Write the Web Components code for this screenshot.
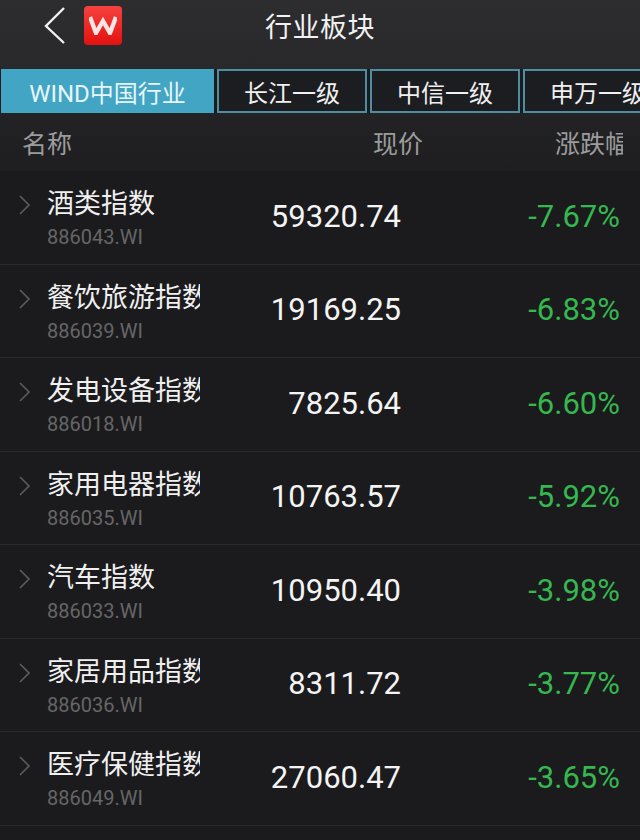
<!DOCTYPE html>
<html>
<head>
<meta charset="utf-8">
<style>
html, body { margin: 0; height: 100%; background: #1b1b1d; overflow: hidden; }
body { font-family: Roboto, "Noto Sans CJK SC", sans-serif; }
</style>
</head>
<body>
<quote-app></quote-app>
<script>
const FONT = `Roboto, "Noto Sans CJK SC", sans-serif`;

customElements.define("top-bar", class extends HTMLElement {
    connectedCallback() {
        this.attachShadow({mode: "open"}).innerHTML = `
<style>
:host { display: flex; align-items: center; height: 50px; position: relative; margin-bottom: 18px; color: #f2f2f2; }
.back { margin-left: 44px; width: 22px; height: 40px; }
.logo { margin-left: 18px; width: 38px; height: 39px; border-radius: 4px; background: linear-gradient(#f5423f, #e2120f); display: flex; align-items: center; justify-content: center; }
.title { flex: 1; text-align: center; font-size: 27px; margin-right: 122px; margin-left: 0; letter-spacing: 0.5px; }
</style>
<svg class="back" viewBox="0 0 22 40"><path d="M20 3 L2 21 L20 38" fill="none" stroke="#f0f0f0" stroke-width="2.4"/></svg>
<div class="logo"><svg width="28" height="20" viewBox="0 0 28 20"><path d="M1 2 L7 18 L14 6 L21 18 L27 2" fill="none" stroke="#fbe4e4" stroke-width="4.4"/></svg></div>
<div class="title"><slot></slot></div>
`;
    }
});

customElements.define("tab-item", class extends HTMLElement {
    connectedCallback() {
        this.attachShadow({mode: "open"}).innerHTML = `
<style>
:host { display: flex; flex: none; box-sizing: border-box; height: 44px; align-items: center; justify-content: center; white-space: nowrap; overflow: hidden;
    font-size: 24px; color: #f0f0f0; background: #1c1d20; border: 2px solid #4f8ea1; }
:host([active]) { background: #43a5c4; border-color: #43a5c4; color: #e6f6fa; }
</style>
<slot></slot>
`;
    }
});

customElements.define("tab-bar", class extends HTMLElement {
    connectedCallback() {
        this.attachShadow({mode: "open"}).innerHTML = `
<style>
:host { display: flex; gap: 3px; padding-left: 1px; width: 700px; }
</style>
<slot></slot>
`;
    }
});

customElements.define("column-head", class extends HTMLElement {
    connectedCallback() {
        this.attachShadow({mode: "open"}).innerHTML = `
<style>
:host { display: flex; align-items: center; height: 58px; color: #9c9c9c; font-size: 25px; white-space: nowrap; overflow: hidden; }
.name { margin-left: 22px; width: 351px; }
.price { width: 182px; }
.change { width: 68px; overflow: hidden; }
</style>
<div class="name">名称</div><div class="price">现价</div><div class="change">涨跌幅</div>
`;
    }
});

customElements.define("quote-row", class extends HTMLElement {
    connectedCallback() {
        const a = n => this.getAttribute(n);
        this.attachShadow({mode: "open"}).innerHTML = `
<style>
:host { display: flex; box-sizing: border-box; height: 93.5px; align-items: center; border-bottom: 1px solid #29292b; }
.arrow { width: 12px; height: 22px; margin-left: 19px; margin-right: 16px; align-self: flex-start; margin-top: 23px; }
.info { width: 153px; overflow: hidden; align-self: flex-start; }
.name { font-size: 27px; line-height: 36px; margin-top: 15px; color: #f0f0f0; white-space: nowrap; }
.code { font-size: 20px; line-height: 24px; margin-top: 3px; color: #666; }
.price { width: 201px; text-align: right; font-size: 31px; color: #f4f4f4; margin-top: -2px; }
.pct { width: 219px; text-align: right; font-size: 31px; color: #34b84f; margin-top: -2px; }
</style>
<svg class="arrow" viewBox="0 0 12 22"><path d="M1 2 L10 11 L1 20" fill="none" stroke="#5c5c5c" stroke-width="1.6"/></svg>
<div class="info"><div class="name">${a("name")}</div><div class="code">${a("code")}</div></div>
<div class="price">${a("price")}</div>
<div class="pct">${a("pct")}</div>
`;
    }
});

customElements.define("quote-app", class extends HTMLElement {
    connectedCallback() {
        const rows = [
            ["酒类指数", "886043.WI", "59320.74", "-7.67%"],
            ["餐饮旅游指数", "886039.WI", "19169.25", "-6.83%"],
            ["发电设备指数", "886018.WI", "7825.64", "-6.60%"],
            ["家用电器指数", "886035.WI", "10763.57", "-5.92%"],
            ["汽车指数", "886033.WI", "10950.40", "-3.98%"],
            ["家居用品指数", "886036.WI", "8311.72", "-3.77%"],
            ["医疗保健指数", "886049.WI", "27060.47", "-3.65%"],
        ];
        this.attachShadow({mode: "open"}).innerHTML = `
<style>
:host { display: block; width: 640px; height: 840px; overflow: hidden; font-family: ${FONT}; }
.top { background: linear-gradient(#2d2d2f, #29292b); padding-bottom: 1px; }
.list { background: #1b1b1d; }
.head { background: linear-gradient(#232325, #1e1e20); }
</style>
<div class="top">
<top-bar>行业板块</top-bar>
</div>
<tab-bar>
<tab-item active style="width:213px">WIND中国行业</tab-item>
<tab-item style="width:150px">长江一级</tab-item>
<tab-item style="width:150px">中信一级</tab-item>
<tab-item style="width:150px">申万一级</tab-item>
</tab-bar>
<div class="head"><column-head></column-head></div>
<div class="list">
${rows.map(r => `<quote-row name="${r[0]}" code="${r[1]}" price="${r[2]}" pct="${r[3]}"></quote-row>`).join("")}
</div>
`;
    }
});
</script>
</body>
</html>
